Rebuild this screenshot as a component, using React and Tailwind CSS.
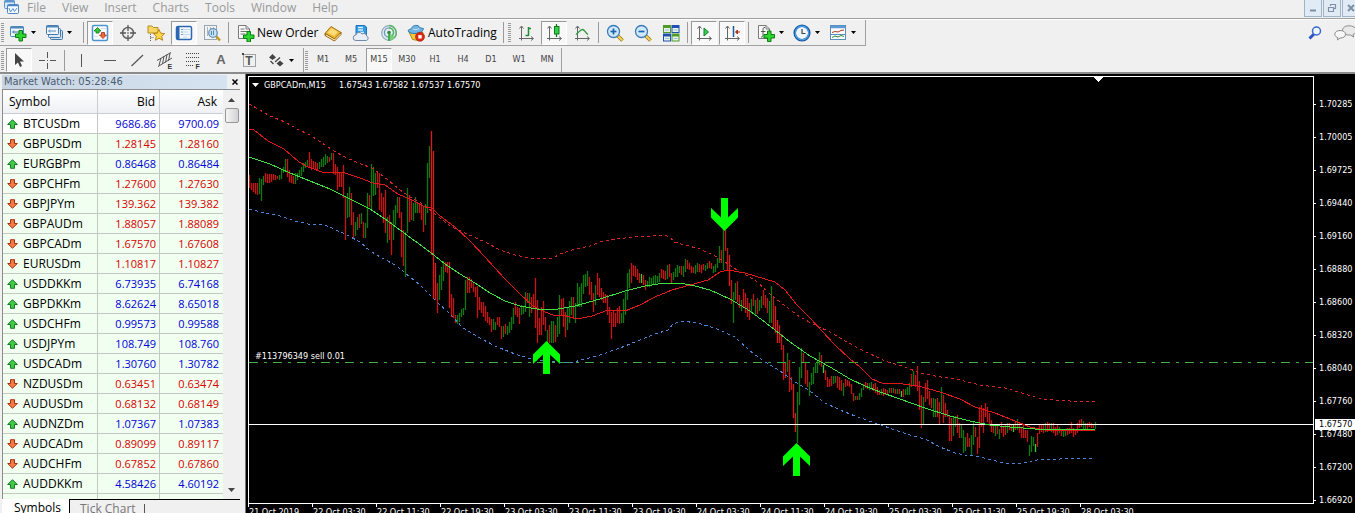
const SANS = "font-['Open_Sans','Noto_Sans',sans-serif]";
const SMALL = "font-['DejaVu_Sans_Condensed','DejaVu_Sans',sans-serif] text-[9px]";

const quotes = [
  ["BTCUSDm", "9686.86", "9700.09", "up"],
  ["GBPUSDm", "1.28145", "1.28160", "down"],
  ["EURGBPm", "0.86468", "0.86484", "up"],
  ["GBPCHFm", "1.27600", "1.27630", "down"],
  ["GBPJPYm", "139.362", "139.382", "down"],
  ["GBPAUDm", "1.88057", "1.88089", "down"],
  ["GBPCADm", "1.67570", "1.67608", "down"],
  ["EURUSDm", "1.10817", "1.10827", "down"],
  ["USDDKKm", "6.73935", "6.74168", "up"],
  ["GBPDKKm", "8.62624", "8.65018", "up"],
  ["USDCHFm", "0.99573", "0.99588", "up"],
  ["USDJPYm", "108.749", "108.760", "up"],
  ["USDCADm", "1.30760", "1.30782", "up"],
  ["NZDUSDm", "0.63451", "0.63474", "down"],
  ["AUDUSDm", "0.68132", "0.68149", "down"],
  ["AUDNZDm", "1.07367", "1.07383", "up"],
  ["AUDCADm", "0.89099", "0.89117", "down"],
  ["AUDCHFm", "0.67852", "0.67860", "down"],
  ["AUDDKKm", "4.58426", "4.60192", "up"],
];

const menus = ["File", "View", "Insert", "Charts", "Tools", "Window", "Help"];
const timeframes = ["M1", "M5", "M15", "M30", "H1", "H4", "D1", "W1", "MN"];
const prices = ["1.70285", "1.70005", "1.69725", "1.69440", "1.69160", "1.68880", "1.68600", "1.68320", "1.68040", "1.67760", "1.67480", "1.67200", "1.66920"];
const dates = ["21 Oct 2019", "22 Oct 03:30", "22 Oct 11:30", "22 Oct 19:30", "23 Oct 03:30", "23 Oct 11:30", "23 Oct 19:30", "24 Oct 03:30", "24 Oct 11:30", "24 Oct 19:30", "25 Oct 03:30", "25 Oct 11:30", "25 Oct 19:30", "28 Oct 03:30"];

// Bars, one per 15 minutes: colour, high, low. Values are thirds of a pixel from each block's base.
const barBlocks = [
  {
    base: -21,
    bars: "r315-355 r338-360 r338-365 r340-373 r338-375 g325-372 g327-392 g318-345 r308-335 r312-338 r312-340 r312-335 r312-330 r315-330 r317-328 g315-330 g298-328 g290-308 g267-305 r268-320 r300-335 r315-338 r318-342 g308-342 g308-330 g300-322 g290-318 g280-305 g275-295 g270-290 r247-290 r268-300 r272-295 r275-300 r280-300 g275-298 g267-292 g262-290 g252-285 g258-280 r260-275 g250-270 r250-312 r282-315 r290-360 r310-352 r310-350 r285-385 r380-510 g370-445 g350-440 r370-465 r425-503 g455-498 g442-480 r432-475 g430-462 r455-505 g458-503 g370-473 r375-412 g283-420 g292-378 g308-375 r310-355 r310-420 r370-425 r380-460 r360-488 g440-520 r435-510 r455-555 g420-510 g405-465 g380-430 r382-445 r425-560 r480-588 g485-620 g355-490 r375-455 r390-450 g400-452 g380-430 g395-430 r398-430 r400-450 r410-487 g403-465 g280-430 g228-325 R183-555 R243-685 R580-690 r640-728 g615-690 g590-660 g572-632 r575-605 r577-610 R575-715 r672-740 r685-745 r735-760 g735-763 g728-755 g718-742 g715-735 g630-720 r622-670 r620-670 r628-655 r640-665 r650-680 r648-745 r680-720 r695-730",
  },
  {
    base: 369,
    bars: "r305-350 r318-362 r335-370 r350-375 r358-395 g358-390 g365-390 r350-375 r352-380 r378-418 g378-412 r372-402 g378-405 g367-398 g350-390 g325-372 r305-345 r322-350 r325-372 g315-345 g318-343 g275-335 r278-308 g280-350 r290-340 r283-325 r235-385 r300-428 r355-405 r320-405 r303-375 r350-392 g390-430 r375-430 g362-430 g362-430 r375-425 g350-412 g285-402 r298-345 r295-380 r335-410 g320-390 g302-370 g290-345 r290-352 g310-368 g248-320 g262-320 g248-322 g225-282 g222-262 g213-258 r230-285 r245-300 r278-335 g255-315 r218-285 r235-290 r265-300 r275-310 r282-308 r285-345 r320-368 r335-418 r330-382 r338-380 r325-368 r318-372 g340-370 g298-370 g275-345 g220-300 g208-265 r188-250 r195-228 r198-230 r208-240 r218-250 l222-248 r225-255 r240-270 g242-262 g232-260 g235-258 g228-255",
  },
  {
    base: 309,
    bars: "g285-312 g288-310 g280-305 r268-295 r270-298 r272-300 g255-298 r252-292 r280-308 g275-300 g265-292 g255-290 g258-280 r258-285 g258-290 g238-275 r240-268 r250-270 r258-278 r262-278 g255-282 g250-275 r252-275 r255-278 r252-270 g255-272 g248-268 r243-265 r250-268 g258-278 g252-275 g235-265 g198-250 r210-248 g148-270 r150-213 r205-270 R225-318 r300-372 g335-430 g310-360 r302-365 r345-385 g360-392 r328-380 r340-400 r355-410 r370-420 g358-400 r342-378 g360-405 r355-403 g360-392 g348-385 r330-375 r345-385 r355-400 g362-430 g318-430 r350-445 R378-460 R420-490 r435-490 r462-510 r495-600 r550-595 g518-575 r540-635 r590-630 R612-715 R700-755 g635-790 g560-675 g505-595 r520-550 r545-612 r570-620 g605-648 g580-615 g560-612 g548-580 g540-580 g515-555 r525-560 l555-578 r570-600 r590-622 r598-620 r588-618 g588-612 g588-610 r588-625 r590-630 r600-632 g610-648 r598-620 r600-618 r602-622 r612-642 r640-662 g648-660 r648-660 g638-660 g625-650 g612-630 r606-625 r608-628 g608-630 g605-628 r612-632 r610-640 r622-645",
  },
  {
    base: 759,
    bars: "r180-195 g178-195 r175-198 r178-195 r180-195 g175-190 r175-190 g175-188 r178-192 g178-192 r178-192 l182-202 r178-200 g178-195 g170-195 g160-195 r132-172 g122-165 r135-170 r108-182 r152-240 r195-295 g200-285 r160-215 r150-208 r182-225 r205-235 g205-262 g208-262 r205-262 r215-282 g170-245 r195-280 r220-262 r240-260 r258-332 r265-332 g258-318 g258-290 r255-310 r278-325 g285-325 g300-368 g320-362 r310-350 r325-350 g315-378 g275-345 r290-320 r320-372 r230-355 r225-292 r235-310 r220-262 r230-275 r248-288 r270-305 r285-308 g285-318 r285-312 g298-328 r275-310 r290-320 r285-315 g278-310 r278-300 r282-302 l282-305 r275-300 g268-300 r275-310 r290-325 r285-325 r300-325 r300-335 g345-378 g318-365 g320-348 l342-365 r308-352 r283-312 r285-305 r282-308 g280-305 r275-305 r278-300 g278-305 r278-310 r290-318 r285-315 g290-310 r300-318 g302-322 g300-318 r295-315 r295-312 r275-308 r295-322 r298-315 r280-308 r270-295 r268-292 g272-298 g278-300 r278-296 r275-290 r280-295 r285-295 g276-298",
  },
];

const barColors = { g: "#0f7a0f", l: "#35d035", r: "#c81414", R: "#e01a1a" };

// One path per colour, each bar a one-pixel vertical stroke
const barPaths = { g: "", l: "", r: "", R: "" };
barBlocks
  .flatMap(({ base, bars }) => bars.split(" ").map((bar) => ({ base, bar })))
  .forEach(({ base, bar }, i) => {
    const [high, low] = bar.slice(1).split("-").map((v) => Math.round((base + Number(v)) / 3));
    barPaths[bar[0]] += `M${i * 2 + 0.5} ${high}V${low}`;
  });

const upperBand = "249,104 258,109 270,116 285,122 299,130 310,135 322,143 334,151 345,157 358,163 372,168 388,180 400,190 410,197 425,205 435,214 450,226 465,233 485,242 500,250 515,255 530,258 545,259 553,258 560,254 575,249 590,246 600,242 615,239 635,237 665,235 671,238 674,242 685,245 700,249 715,256 725,262 740,272 755,280 770,294 785,306 800,317 815,325 830,332 845,341 862,350 885,361 905,367 920,373 935,376 960,380 980,385 1005,388 1025,394 1042,399 1070,401 1096,401";
const slowAverage = "249,129 254,130 268,141 284,149 299,162 308,167 322,172 345,173 360,178 373,183 385,185 398,194 412,200 425,207 432,208 440,216 455,227 470,241 485,257 505,279 520,294 533,306 545,312 553,315 563,315 577,319 592,316 608,310 625,311 640,305 655,297 672,290 690,285 708,280 720,272 728,270 745,273 765,279 775,282 785,290 797,305 810,318 822,331 835,345 850,359 860,367 872,379 884,384 895,383 918,386 940,392 960,399 975,407 995,413 1015,421 1030,427 1045,430 1060,431 1075,430 1095,430";
const middleLine = "249,157 270,164 290,173 310,181 330,189 350,199 370,209 385,219 400,230 415,241 430,252 445,264 460,274 475,283 490,293 505,301 520,306 537,309 558,309 575,306 600,299 625,291 645,286 665,283 680,283 695,286 710,290 730,299 750,311 770,326 790,342 810,356 830,367 850,379 865,386 880,392 900,399 925,408 950,416 970,421 990,425 1010,427 1035,429 1095,429";
const lowerBand = "249,209 265,213 280,216 295,221 308,224 325,225 345,234 360,242 370,251 382,258 397,266 405,273 420,285 435,300 450,314 463,328 480,338 495,346 515,354 535,360 550,361 570,363 585,359 600,355 620,348 640,340 655,334 668,330 673,324 682,321 697,323 715,328 735,337 750,351 765,362 780,371 795,382 810,391 825,403 840,410 855,416 875,423 895,430 910,435 925,439 940,447 955,453 965,455 980,457 1000,462 1012,464 1030,462 1040,459 1060,459 1092,458";

const ARROW = "M0 0 L13.5 13.5 V23 L3.5 13.5 V33 H-3.5 V13.5 L-13.5 23 V13.5 Z";

function Icon({ children, size = 18 }) {
  return (
    <svg width={size} height={size} viewBox="0 0 18 18" fill="none" className="shrink-0" aria-hidden="true">
      {children}
    </svg>
  );
}

const Plus = ({ x = 0, y = 0 }) => (
  <path
    transform={`translate(${x} ${y})`}
    d="M4 .5h3.500V4H11v3.500H7.500V11H4V7.500H.5V4H4Z"
    fill="#2fd52f"
    stroke="#0b7d12"
  />
);

// Axes shared by the chart type and scrolling buttons
const Axes = () => (
  <path d="M4.500 2.500V16.500M2 14.500H16M2.500 4.500l2-2.500 2 2.500M14 12.500l2.500 2-2.500 2" stroke="#666" />
);

const NewChartIcon = () => (
  <Icon>
    <rect x="1.500" y="2.500" width="13" height="10" rx="1" fill="#eef6fd" stroke="#4d86b8" />
    <path d="M1.500 3.500h13" stroke="#4d86b8" strokeWidth="2" />
    <path d="M4 8h6M5 6.500L3.500 8 5 9.500" stroke="#3a6f9d" />
    <Plus x={6} y={6} />
  </Icon>
);

const ProfilesIcon = () => (
  <Icon>
    <rect x="5.500" y="6.500" width="12" height="9" rx="1" fill="#cfe3f5" stroke="#4577a6" />
    <rect x="3.500" y="4.500" width="12" height="9" rx="1" fill="#dcebf8" stroke="#4577a6" />
    <rect x="1.500" y="1.500" width="12" height="9" rx="1" fill="#eff7fe" stroke="#4577a6" />
    <path d="M1.500 2.500h12" stroke="#4d86b8" strokeWidth="2" />
    <path d="M4 7h7M5 5.500L3.500 7 5 8.500" stroke="#5b8bb8" />
  </Icon>
);

const MarketWatchIcon = () => (
  <Icon>
    <rect x="1.500" y="1.500" width="15" height="15" rx="1.500" fill="#fbfdff" stroke="#4d93cf" strokeWidth="1.500" />
    <path d="M6.500 3.500L10 7H8v2H5V7H3Z" fill="#35c535" stroke="#14791a" strokeWidth=".8" />
    <path d="M12 14.500L8.500 11h2V8.500h3V11h2Z" fill="#f2683a" stroke="#a82b10" strokeWidth=".8" />
    <path d="M10 4.500h5M3 12.500h4" stroke="#d5dde5" />
  </Icon>
);

const TargetIcon = () => (
  <Icon>
    <circle cx="9" cy="9" r="5.500" stroke="#666" strokeWidth="1.500" />
    <path d="M9 1v6M9 11v6M1 9h6M11 9h6" stroke="#555" strokeWidth="1.300" />
    <path d="M8 9h2" stroke="#555" />
  </Icon>
);

const FavoritesIcon = () => (
  <Icon>
    <path d="M1 2h4l1.500 1.500H11V9H1Z" fill="#f7d668" stroke="#b98d1e" />
    <path d="M3.500 10v7M3.500 13.500h3" stroke="#666" strokeDasharray="1 1" />
    <path d="M12 5.500l1.700 3.700 4 .4-3 2.700.9 4-3.600-2.100-3.600 2.100.9-4-3-2.700 4-.4Z" fill="#ffd84a" stroke="#b27d10" strokeWidth=".9" />
  </Icon>
);

const NavigatorIcon = () => (
  <Icon>
    <rect x="1.500" y="2.500" width="15" height="13" rx="1.500" fill="#f3f8fd" stroke="#2c66b0" strokeWidth="1.500" />
    <path d="M2 3h2.500v12H2Z" fill="#2c66b0" />
    <path d="M8 5.500h7M8 8h5M8 10.500h7M8 13h4" stroke="#c3d6ea" />
    <path d="M6.500 5.500h1M6.500 8h1M6.500 10.500h1" stroke="#1d3f70" />
  </Icon>
);

const TesterIcon = () => (
  <Icon>
    <rect x="1.500" y="1.500" width="12" height="14" fill="#f1f3f5" stroke="#9aa4ad" />
    <path d="M4.500 3v9M7.500 3v9M10.500 3v9" stroke="#aab6c0" />
    <path d="M13 12l4 4.500" stroke="#c99a23" strokeWidth="2.500" />
    <circle cx="10" cy="9" r="4.300" fill="#bfe0f6" fillOpacity=".85" stroke="#6392bb" strokeWidth="1.200" />
    <path d="M8.500 7v4M10.500 6.500V11" stroke="#5d88ad" />
  </Icon>
);

const NewOrderIcon = () => (
  <Icon>
    <path d="M1.500 1.500H9L12.500 5V14.500H1.500Z" fill="#fafafa" stroke="#7a7a7a" />
    <path d="M9 1.500V5h3.500" stroke="#7a7a7a" />
    <path d="M3.500 5h4M3.500 7.500h7M3.500 10h5" stroke="#777" />
    <Plus x={6} y={7} />
  </Icon>
);

const BookIcon = () => (
  <Icon>
    <path d="M1 9.500L7 2.500l10 6-6 7Z" fill="#edb62f" stroke="#a87412" />
    <path d="M3.500 8.500L7.500 4l6.500 4-4 4Z" fill="#fbdc79" />
    <path d="M1 9.500v2L10.500 17l6.500-6.500v-2L10.500 15Z" fill="#d9951c" stroke="#8f600d" />
    <path d="M2 11l8.500 5 6-6" stroke="#fff3c9" />
  </Icon>
);

const CloudIcon = () => (
  <Icon>
    <path d="M4 1.500h8.500l2 1.500v8H4Z" fill="#2f9be6" stroke="#1b74bd" />
    <path d="M6 3.500h5M6 6h5M8 8.500h4" stroke="#d8f0ff" strokeWidth="1.300" />
    <path d="M4 16.500a2.700 2.700 0 0 1-.2-5.400 3.400 3.400 0 0 1 6.300-1 2.800 2.800 0 0 1 4.600 2 2.300 2.300 0 0 1-.4 4.400Z" fill="#e8eef6" stroke="#7489a8" />
  </Icon>
);

const SignalIcon = () => (
  <Icon>
    <circle cx="9" cy="9" r="7.300" fill="#e3edf2" stroke="#8ba9c3" strokeWidth="1.200" />
    <circle cx="9" cy="8.500" r="4.600" stroke="#6c97b8" strokeWidth="1.300" />
    <path d="M9 8.500l6 5a8 8 0 0 1-7 3.300Z" fill="#79cf79" />
    <path d="M9 3.900a4.600 4.600 0 0 1 3.500 7.500M9 1.500a7.300 7.300 0 0 1 5.500 12" stroke="#5cb563" strokeWidth="1.400" />
    <circle cx="9" cy="8.500" r="1.800" fill="#2c8a46" />
    <path d="M9 9v8" stroke="#2fa043" strokeWidth="1.500" />
  </Icon>
);

const AutoTradingIcon = () => (
  <Icon>
    <path d="M2 8l3.500 7.500 6 1L16 8Z" fill="#f4c93c" stroke="#b48715" />
    <path d="M1 6.500C3 4.500 4.500 5.500 5 3.500 6 .8 11.500.8 12.500 3c.5 1.500 2.500 1 4 1.500-1 4-5 5-8.500 5S2 9 1 6.500Z" fill="#6fb4e2" stroke="#2d76ab" />
    <path d="M6 5c2 1 4 1 6-.5" stroke="#c8e7fa" />
    <circle cx="13" cy="12.800" r="4.500" fill="#dc2b12" stroke="#a31404" strokeWidth=".6" />
    <rect x="11.300" y="11.100" width="3.400" height="3.400" fill="#fff" />
  </Icon>
);

const BarChartIcon = () => (
  <Icon>
    <Axes />
    <path d="M11.500 3v9M11 4.500h3M8.500 11.500h3" stroke="#1f8c35" strokeWidth="1.500" />
  </Icon>
);

const CandleIcon = () => (
  <Icon>
    <Axes />
    <path d="M11.500 0v13" stroke="#0d6b1c" strokeWidth="1.200" />
    <rect x="9.500" y="2.500" width="4.500" height="7.500" fill="#35d045" stroke="#0d7d1c" />
  </Icon>
);

const LineChartIcon = () => (
  <Icon>
    <Axes />
    <path d="M3 10.500C6 8 7.500 5.500 9.500 5.500s2.500 3 5.500 5" stroke="#2b9a3d" strokeWidth="1.300" />
  </Icon>
);

const ZoomIcon = ({ plus }) => (
  <Icon>
    <path d="M11 11l5.500 5.500" stroke="#9b7413" strokeWidth="3.500" />
    <path d="M11.500 11.500l4.800 4.800" stroke="#f4d457" strokeWidth="2" />
    <circle cx="7.500" cy="7.500" r="6" fill="#cfeafc" stroke="#3a7ab8" strokeWidth="1.300" />
    <path d="M4.500 7.500h6" stroke="#1d62a8" strokeWidth="1.700" />
    {plus && <path d="M7.500 4.500v6" stroke="#1d62a8" strokeWidth="1.700" />}
  </Icon>
);

const TileIcon = () => (
  <Icon>
    <rect x="1" y="1" width="8" height="8" fill="#4f9a28" />
    <rect x="9.500" y="1" width="8" height="8" fill="#1f4fb0" />
    <rect x="1" y="9.500" width="8" height="8" fill="#1f4fb0" />
    <rect x="9.500" y="9.500" width="8" height="8" fill="#4f9a28" />
    <path d="M2 4h6v4h-6ZM10.500 4h6v4h-6ZM2 12.500h6v4h-6ZM10.500 12.500h6v4h-6Z" fill="#e7f3e4" />
    <path d="M3 6h4M11.500 6h4M3 14.500h4M11.500 14.500h4" stroke="#9bbfe0" />
  </Icon>
);

const AutoScrollIcon = () => (
  <Icon>
    <Axes />
    <path d="M9 4v8l4.500-4Z" fill="#3ccf4c" stroke="#13802a" />
  </Icon>
);

const ShiftIcon = () => (
  <Icon>
    <Axes />
    <path d="M10.500 2v11" stroke="#1b5a9d" strokeWidth="1.500" />
    <path d="M17 8h-4M14.500 6L12.500 8l2 2Z" fill="#b42a12" stroke="#b42a12" />
  </Icon>
);

const IndicatorsIcon = () => (
  <Icon>
    <path d="M1.500 1.500H9L12.500 5V14.500H1.500Z" fill="#fafafa" stroke="#7a7a7a" />
    <path d="M9 1.500V5h3.500" stroke="#7a7a7a" />
    <path d="M8 3.500c-2-.5-2 1-2 3V12c0 1-1 1-2 1M4 7.500h4.500" stroke="#555" />
    <Plus x={6.500} y={6.500} />
  </Icon>
);

const ClockIcon = () => (
  <Icon>
    <circle cx="9" cy="9" r="7.300" fill="#eef6fd" stroke="#14559f" strokeWidth="2.500" />
    <circle cx="9" cy="9" r="6.800" stroke="#4da0e6" strokeWidth="1.200" />
    <path d="M9 5v4.500h3.500" stroke="#444" strokeWidth="1.200" />
  </Icon>
);

const TemplateIcon = () => (
  <Icon>
    <rect x="1.500" y="1.500" width="15" height="14" fill="#fbfdff" stroke="#5b8cba" />
    <path d="M2 3h14" stroke="#5c9ad4" strokeWidth="2.500" />
    <path d="M3 8.500l3-1 3 .5 3-1.500 3-.5" stroke="#a33d1c" />
    <path d="M3 13.500l3-1.500 3 1 3-1.500 3 1" stroke="#248a3b" />
    <path d="M2 10.500h14" stroke="#5b8cba" />
  </Icon>
);

const CursorIcon = () => (
  <Icon>
    <path d="M5 2v12l3-2.500 2 4.500 2-1-2-4.500h4Z" fill="#444" />
  </Icon>
);

const CrosshairIcon = () => (
  <Icon>
    <path d="M9.500 1v6M9.500 12v6M1 9.500h6M12 9.500h6M9 9.500h1" stroke="#555" />
  </Icon>
);

const VLineIcon = () => (
  <Icon>
    <path d="M9.500 3v13" stroke="#555" />
  </Icon>
);

const HLineIcon = () => (
  <Icon>
    <path d="M4 9.500h12" stroke="#555" />
  </Icon>
);

const TrendIcon = () => (
  <Icon>
    <path d="M3.500 15L15 4" stroke="#555" strokeWidth="1.200" />
  </Icon>
);

const ChannelIcon = () => (
  <Icon>
    <path d="M1 9.500L15 1.500M2 15.500L16 7M5 7L3 14.500M8 5L6.500 13M11 3.500L9.500 11.500M14 2L12.500 10" stroke="#555" />
    <text x="11.500" y="18" fontSize="7" fontWeight="700" fill="#333" fontFamily="Liberation Sans">E</text>
  </Icon>
);

const FiboIcon = () => (
  <Icon>
    <path d="M2 2.500h13M2 6.500h13M2 10.500h13M2 14.500h8" stroke="#444" strokeDasharray="1 1" />
    <text x="11.500" y="18" fontSize="7" fontWeight="700" fill="#333" fontFamily="Liberation Sans">F</text>
  </Icon>
);

const LabelIcon = () => (
  <Icon>
    <rect x="3.500" y="3.500" width="12" height="12" stroke="#555" strokeDasharray="1 1" />
    <path d="M2 2h2v2H2Z" fill="#444" />
    <text x="5.300" y="14" fontSize="12" fontWeight="700" fill="#555" fontFamily="Liberation Sans">T</text>
  </Icon>
);

const ArrowsIcon = () => (
  <Icon>
    <path d="M5.500 3L9 6.500 5.500 9 2 6.500ZM13 9.500l3.500 3L13 15.500l-3.500-3Z" fill="#444" />
    <path d="M3.500 10l3 3M8 11l5-4.500" stroke="#444" strokeWidth="1.300" />
  </Icon>
);

function Grip() {
  return (
    <div className="ml-px mr-px flex w-[3px] shrink-0 flex-col justify-center gap-px">
      {Array.from({ length: 10 }, (_, i) => (
        <span key={i} className="h-px bg-[#999]" />
      ))}
    </div>
  );
}

function Separator({ className = "" }) {
  return <div className={`h-[21px] w-px shrink-0 self-center bg-[#9a9a9a] ${className}`} />;
}

function ToolButton({ label, pressed, children }) {
  return (
    <button type="button" aria-label={label} aria-pressed={pressed} className="flex w-7 shrink-0 items-center justify-center">
      <span
        className={`flex h-6 w-[26px] items-center justify-center ${
          pressed ? "border border-b-white border-l-[#999] border-r-white border-t-[#999] bg-[#f8f8f8]" : ""
        }`}
      >
        {children}
      </span>
    </button>
  );
}

function Caret() {
  return (
    <svg width="5" height="3" viewBox="0 0 5 3" className="shrink-0" aria-hidden="true">
      <path d="M0 0h5L2.500 3Z" fill="#000" />
    </svg>
  );
}

function DropButton({ label, children }) {
  return (
    <button type="button" aria-label={label} className="flex w-9 shrink-0 items-center gap-1">
      {children}
      <Caret />
    </button>
  );
}

function MenuBar() {
  return (
    <header className="flex h-[19px] shrink-0 items-stretch border-b border-[#a0a0a0]">
      <div className="flex w-[27px] shrink-0 items-start pl-1">
        <svg width="15" height="14" viewBox="0 0 15 14" fill="none" aria-hidden="true">
          <rect x=".5" y=".5" width="10" height="8" rx="1" fill="#dcebfa" stroke="#5b94cf" />
          <path d="M.5 1.500h10" stroke="#5b94cf" strokeWidth="2" />
          <rect x="3.500" y="4.500" width="11" height="9" rx="1" fill="#f3f9ff" stroke="#4c86c6" />
          <path d="M3.500 5.500h11" stroke="#4c86c6" strokeWidth="1.500" />
          <path d="M5 8l1.500 4L9 8.500l1.500 3L13 8" stroke="#5d93cf" />
        </svg>
      </div>
      <nav className="flex grow items-start gap-4 text-[12px] leading-4 text-[#999]">
        {menus.map((menu) => (
          <button key={menu} type="button">{menu}</button>
        ))}
      </nav>
      <div className="-mr-[5px] flex shrink-0 gap-px">
        {["Minimize", "Restore", "Close"].map((label) => (
          <button
            key={label}
            type="button"
            aria-label={label}
            className="flex h-[17px] w-[18px] items-center justify-center border border-t-0 border-[#9fb2c6] bg-[#e1ebf6]"
          >
            <svg width="10" height="10" viewBox="0 0 10 10" fill="none" stroke="#7f8fa5" aria-hidden="true">
              {label === "Minimize" && <path d="M2 7.500h6" strokeWidth="2" />}
              {label === "Restore" && <path d="M3.500 3V1.500h5v4H7M1.500 4.500h5v4h-5Z" strokeWidth="1.200" />}
              {label === "Close" && <path d="M2 2l6 6M8 2L2 8" strokeWidth="2" />}
            </svg>
          </button>
        ))}
      </div>
    </header>
  );
}

function MainToolbar() {
  return (
    <div className="flex h-[27px] shrink-0 items-stretch border-t border-white">
      <div className="flex border-b border-r border-[#a0a0a0]">
        <Grip />
        <div className="ml-1 flex">
          <DropButton label="New chart"><NewChartIcon /></DropButton>
          <DropButton label="Profiles"><ProfilesIcon /></DropButton>
        </div>
        <Separator className="mx-0.5" />
        <ToolButton label="Market Watch" pressed><MarketWatchIcon /></ToolButton>
        <ToolButton label="Data Window"><TargetIcon /></ToolButton>
        <ToolButton label="Favorites"><FavoritesIcon /></ToolButton>
        <ToolButton label="Navigator" pressed><NavigatorIcon /></ToolButton>
        <ToolButton label="Strategy Tester"><TesterIcon /></ToolButton>
        <Separator className="ml-0.5 mr-2" />
        <button type="button" className="flex w-[82px] items-center gap-0.5 whitespace-nowrap text-[12px] text-black">
          <NewOrderIcon />
          New Order
        </button>
        <ToolButton label="MetaEditor"><BookIcon /></ToolButton>
        <ToolButton label="Virtual hosting"><CloudIcon /></ToolButton>
        <ToolButton label="Signals"><SignalIcon /></ToolButton>
        <button type="button" className="mx-1 flex w-[92px] items-center gap-[3px] whitespace-nowrap text-[12px] text-black">
          <AutoTradingIcon />
          AutoTrading
        </button>
        <Separator className="mr-[3px]" />
        <Grip />
        <ToolButton label="Bar chart"><BarChartIcon /></ToolButton>
        <ToolButton label="Candlesticks" pressed><CandleIcon /></ToolButton>
        <ToolButton label="Line chart"><LineChartIcon /></ToolButton>
        <Separator className="mx-0.5" />
        <ToolButton label="Zoom in"><ZoomIcon plus /></ToolButton>
        <ToolButton label="Zoom out"><ZoomIcon /></ToolButton>
        <ToolButton label="Tile windows"><TileIcon /></ToolButton>
        <Separator className="mx-0.5" />
        <ToolButton label="Auto scroll" pressed><AutoScrollIcon /></ToolButton>
        <ToolButton label="Chart shift" pressed><ShiftIcon /></ToolButton>
        <Separator className="ml-0.5 mr-2" />
        <DropButton label="Indicators"><IndicatorsIcon /></DropButton>
        <DropButton label="Periods"><ClockIcon /></DropButton>
        <DropButton label="Templates"><TemplateIcon /></DropButton>
      </div>
      <div className="-mr-0.5 ml-auto flex items-center gap-3">
        <button type="button" aria-label="Search">
          <svg width="14" height="14" viewBox="0 0 14 14" fill="none" aria-hidden="true">
            <path d="M6 8L1.500 12.500" stroke="#2f55c0" strokeWidth="3" />
            <circle cx="8.500" cy="5" r="4" fill="#eef6ff" stroke="#3a68d0" strokeWidth="1.500" />
          </svg>
        </button>
        <button type="button" aria-label="Chat">
          <svg width="23" height="16" viewBox="0 0 23 16" fill="none" stroke="#8a8a8a" aria-hidden="true">
            <path d="M15 .8c4 0 7 1.800 7 4.700 0 2-1 3.200-3 4l.5 2.500-3-2c-5 .3-8-1.500-8-4.500S11 .8 15 .8Z" fill="#e9e9e9" />
            <path d="M6 5.500c3.500 0 5.500 1.500 5.500 3.800 0 2.400-2 3.700-5.500 3.700l-2.500 2 .3-2.500C2 12 .8 11 .8 9.300.8 7 3 5.500 6 5.500Z" fill="#f7f7f7" />
          </svg>
        </button>
      </div>
    </div>
  );
}

function DrawingToolbar() {
  return (
    <div className="flex h-7 shrink-0 items-stretch border-b-2 border-[#8c8c8c] pt-0.5">
      <div className="flex border-r border-[#a0a0a0]">
        <Grip />
        <ToolButton label="Cursor" pressed><CursorIcon /></ToolButton>
        <ToolButton label="Crosshair"><CrosshairIcon /></ToolButton>
        <Separator className="ml-[3px] mr-0.5" />
        <ToolButton label="Vertical line"><VLineIcon /></ToolButton>
        <ToolButton label="Horizontal line"><HLineIcon /></ToolButton>
        <ToolButton label="Trendline"><TrendIcon /></ToolButton>
        <ToolButton label="Equidistant channel"><ChannelIcon /></ToolButton>
        <ToolButton label="Fibonacci retracement"><FiboIcon /></ToolButton>
        <ToolButton label="Text">
          <span className="font-['Liberation_Sans',sans-serif] text-[13px] font-bold text-[#666]">A</span>
        </ToolButton>
        <ToolButton label="Text label"><LabelIcon /></ToolButton>
        <div className="ml-1 flex">
          <DropButton label="Arrows"><ArrowsIcon /></DropButton>
        </div>
      </div>
      <div className={`flex border-r border-[#a0a0a0] text-[#444] ${SMALL}`}>
        <Grip />
        {timeframes.map((tf) => (
          <ToolButton key={tf} label={tf} pressed={tf === "M15"}>{tf}</ToolButton>
        ))}
      </div>
    </div>
  );
}

function Direction({ up }) {
  return (
    <svg width="11" height="10" viewBox="0 0 11 10" className="shrink-0" aria-hidden="true">
      {up ? (
        <path d="M5.500.7L10.300 5.500H7.500V9.300h-4V5.500H.7Z" fill="#3fc94a" stroke="#177a22" />
      ) : (
        <path d="M5.500 9.300L.7 4.500h2.800V.7h4v3.800h2.800Z" fill="#f27a45" stroke="#a5320f" />
      )}
    </svg>
  );
}

function MarketWatch() {
  return (
    <aside className="flex w-[245px] shrink-0 flex-col pl-0.5">
      <div className="flex h-[15px] shrink-0 items-center pr-[3px]">
        <h2 className="grow bg-linear-to-r from-[#c8d4e2] to-[#d6e4f2] pl-0.5 font-['DejaVu_Sans_Condensed',sans-serif] text-[11px] leading-[14px] text-[#4a5c70]">
          Market Watch: 05:28:46
        </h2>
        <button type="button" aria-label="Close panel" className="flex w-[15px] justify-center">
          <svg width="6" height="6" viewBox="0 0 6 6" aria-hidden="true">
            <path d="M.5.5l5 5M5.500.5l-5 5" stroke="#000" strokeWidth="1.500" />
          </svg>
        </button>
      </div>
      <div className="mr-[5px] flex min-h-0 grow overflow-hidden border-l border-t border-[#8c8c8c] bg-white">
        <div className="grow">
          <table className="w-full table-fixed border-separate border-spacing-0 text-[12px] leading-4 text-black">
            <thead>
              <tr className="bg-linear-to-b from-white to-[#eef0f4]">
                <th className="h-6 w-[95px] border-b border-r border-[#c9cdd3] p-0 pl-1.5 text-left font-normal">Symbol</th>
                <th className="w-[62px] border-b border-r border-[#c9cdd3] p-0 pr-1 text-right font-normal">Bid</th>
                <th className="border-b border-[#c9cdd3] p-0 pr-1.5 text-right font-normal">Ask</th>
              </tr>
            </thead>
            <tbody>
              {quotes.map(([symbol, bid, ask, dir], i) => (
                <tr key={symbol} className={i === 0 ? "bg-white" : "bg-[#f0fff0]"}>
                  <td className="h-5 border-b border-r border-[#c3c8c3] p-0 pl-1">
                    <span className="flex items-center gap-[5px]">
                      <Direction up={dir === "up"} />
                      {symbol}
                    </span>
                  </td>
                  <td className={`border-b border-r border-[#c3c8c3] p-0 pr-[3px] text-right text-[11px] ${dir === "up" ? "text-[#0000d8]" : "text-[#d80000]"}`}>
                    {bid}
                  </td>
                  <td className={`border-b border-[#c3c8c3] p-0 pr-1 text-right text-[11px] ${dir === "up" ? "text-[#0000d8]" : "text-[#d80000]"}`}>
                    {ask}
                  </td>
                </tr>
              ))}
              <tr className="bg-[#f0fff0]">
                <td className="h-5 border-r border-[#c3c8c3]" />
                <td className="border-r border-[#c3c8c3]" />
                <td />
              </tr>
            </tbody>
          </table>
        </div>
        <div className="flex w-[17px] shrink-0 flex-col items-center bg-[#f0f0f0] pb-[7px] pt-2">
          <svg width="7" height="4" viewBox="0 0 7 4" aria-hidden="true">
            <path d="M0 4h7L3.500 0Z" fill="#444" />
          </svg>
          <div className="mt-1.5 h-[15px] w-[14px] rounded-xs border border-[#979797] bg-linear-to-r from-[#f5f5f5] to-[#d2d2d5]" />
          <svg width="7" height="4" viewBox="0 0 7 4" className="mt-auto" aria-hidden="true">
            <path d="M0 0h7L3.500 4Z" fill="#444" />
          </svg>
        </div>
      </div>
      <div className="mr-[5px] flex h-[14px] shrink-0 overflow-hidden text-[12px] leading-[18px]">
        <button type="button" className="h-[18px] w-[68px] border-r border-black bg-white pl-1 text-black">Symbols</button>
        <div className="flex h-[18px] grow items-start border-t border-black text-[#777]">
          <button type="button" className="pl-2.5 pr-2">Tick Chart</button>
          <span className="mt-1 h-3 w-px bg-[#555]" />
        </div>
      </div>
    </aside>
  );
}

function Plot() {
  return (
    <div className="relative min-w-0 grow overflow-hidden border border-white">
      <svg className="absolute inset-0 h-full w-full" fill="none" role="img" aria-label="GBPCADm M15 chart">
        {Object.entries(barPaths).map(([key, d]) => (
          <path key={key} d={d} stroke={barColors[key]} strokeWidth="1.300" />
        ))}
        <g shapeRendering="crispEdges">
          <line x1="0" x2="100%" y1="285.500" y2="285.500" stroke="#3fae3f" strokeDasharray="9 6 3 6" />
          <line x1="0" x2="100%" y1="347.500" y2="347.500" stroke="#fff" />
        </g>
        <g transform="translate(-249 -77)" shapeRendering="crispEdges">
          <polyline points={upperBand} stroke="#d82424" strokeDasharray="3 3" />
          <polyline points={lowerBand} stroke="#4a86d8" strokeDasharray="3 3" />
          <polyline points={slowAverage} stroke="#e01818" />
          <polyline points={middleLine} stroke="#3fe03f" />
          <g fill="#00ff00" shapeRendering="auto">
            <path d={ARROW} transform="translate(546.500 341)" />
            <path d={ARROW} transform="translate(796.500 443)" />
            <path d={ARROW} transform="translate(724.500 231) scale(1 -1)" />
          </g>
          <path d="M1093 77h11l-5.500 5Z" fill="#fff" />
        </g>
      </svg>
      <div className={`absolute left-[3px] top-0.5 flex items-center gap-[5px] leading-[12px] text-white ${SMALL}`}>
        <svg width="7" height="4" viewBox="0 0 7 4" aria-hidden="true">
          <path d="M0 0h7L3.500 4Z" fill="#fff" />
        </svg>
        <span className="pr-2">GBPCADm,M15</span>
        <span>1.67543 1.67582 1.67537 1.67570</span>
      </div>
      <span className={`absolute left-1.5 top-[273px] leading-[12px] text-white ${SMALL}`}>#113796349 sell 0.01</span>
    </div>
  );
}

function Chart() {
  return (
    <section className={`flex min-w-0 grow flex-col border-l border-[#777] bg-black pl-0.5 pt-0.5 text-white ${SMALL}`}>
      <div className="flex min-h-0 grow">
        <Plot />
        <div className="relative flex w-[41px] shrink-0 flex-col pt-3">
          {prices.map((price) => (
            <div key={price} className="flex h-[33px] shrink-0 items-center gap-[3px]">
              <span className="h-px w-0.5 bg-white" />
              {price}
            </div>
          ))}
          <span className="absolute left-px right-0 top-[343px] bg-white pl-1 leading-[11px] text-black">1.67570</span>
        </div>
      </div>
      <div className="flex h-[9px] shrink-0 overflow-hidden">
        {dates.map((date) => (
          <div key={date} className="relative w-16 shrink-0 whitespace-nowrap pl-px leading-[17px]">
            <span className="absolute left-0 top-0 h-[3px] w-px bg-white" />
            {date}
          </div>
        ))}
      </div>
    </section>
  );
}

export default function App() {
  return (
    <div className={`flex h-screen flex-col overflow-hidden bg-[#f0f0f0] ${SANS}`}>
      <MenuBar />
      <MainToolbar />
      <DrawingToolbar />
      <main className="flex min-h-0 grow overflow-hidden">
        <MarketWatch />
        <Chart />
      </main>
    </div>
  );
}
